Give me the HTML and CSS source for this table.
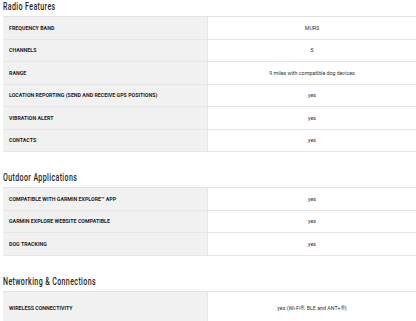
FILE: index.html
```html
<!DOCTYPE html>
<html>
<head>
<meta charset="utf-8">
<link rel="stylesheet" href="styles.css">
</head>
<body>
<section class="section">
  <h2 class="heading"><span class="heading-text">Radio Features</span></h2>
  <div class="specs">
    <div class="row"><div class="label">FREQUENCY BAND</div><div class="value">MURS</div></div>
    <div class="row"><div class="label">CHANNELS</div><div class="value">5</div></div>
    <div class="row"><div class="label">RANGE</div><div class="value">9 miles with compatible dog devices</div></div>
    <div class="row"><div class="label">LOCATION REPORTING (SEND AND RECEIVE GPS POSITIONS)</div><div class="value">yes</div></div>
    <div class="row"><div class="label">VIBRATION ALERT</div><div class="value">yes</div></div>
    <div class="row"><div class="label">CONTACTS</div><div class="value">yes</div></div>
  </div>
</section>
<section class="section">
  <h2 class="heading"><span class="heading-text">Outdoor Applications</span></h2>
  <div class="specs">
    <div class="row"><div class="label">COMPATIBLE WITH GARMIN EXPLORE™ APP</div><div class="value">yes</div></div>
    <div class="row"><div class="label">GARMIN EXPLORE WEBSITE COMPATIBLE</div><div class="value">yes</div></div>
    <div class="row"><div class="label">DOG TRACKING</div><div class="value">yes</div></div>
  </div>
</section>
<section class="section">
  <h2 class="heading"><span class="heading-text">Networking &amp; Connections</span></h2>
  <div class="specs">
    <div class="row tall"><div class="label">WIRELESS CONNECTIVITY</div><div class="value">yes (Wi-Fi®, BLE and ANT+®)</div></div>
  </div>
</section>
</body>
</html>
```
FILE: styles.css
```css
html, body {
  margin: 0;
  padding: 0;
  background: #ffffff;
}
body {
  padding-left: 3px;
  overflow: hidden;
  font-family: Roboto, "Liberation Sans", sans-serif;
}
.section {
  margin-bottom: 19px;
}
.heading {
  margin: 0;
  height: 16px;
  font-family: Roboto, "Liberation Sans", sans-serif;
  font-weight: 500;
  font-size: 11px;
  line-height: 14px;
  color: #262626;
  letter-spacing: 0.6px;
}
.heading-text {
  display: inline-block;
  transform: scaleX(0.64);
  transform-origin: left center;
  white-space: nowrap;
}
.specs {
  border-top: 1px solid #e2e2e2;
}
.row {
  display: grid;
  grid-template-columns: 205px 208px;
  height: 22.5px;
  border-bottom: 1px solid #e6e6e6;
  box-sizing: border-box;
}
.row.tall {
  height: 34px;
}
.label {
  background: #f1f1f1;
  border-right: 1px solid #e8e8e8;
  display: flex;
  align-items: center;
  padding-left: 6px;
  font-weight: bold;
  font-size: 5.3px;
  color: #1e1e1e;
}
.value {
  background: #fff;
  display: flex;
  align-items: center;
  justify-content: center;
  font-size: 5.3px;
  color: #333;
}
```
